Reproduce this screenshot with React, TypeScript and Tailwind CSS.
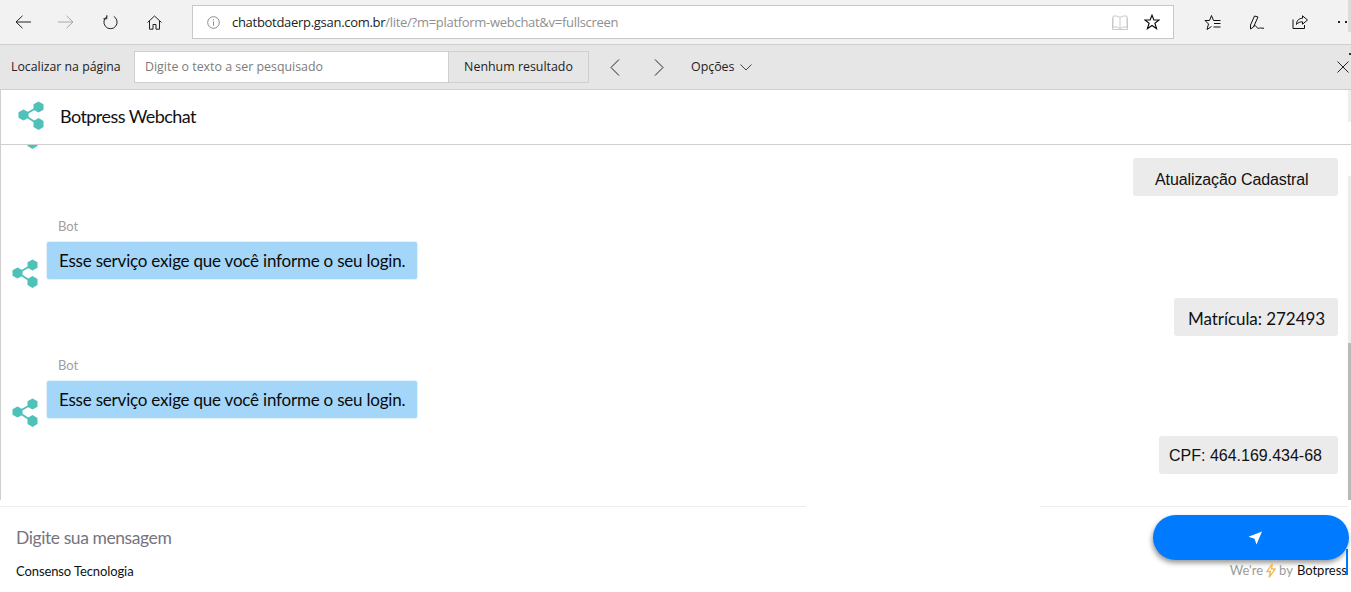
import React from "react";

const Logo = ({ className }: { className?: string }) => (
  <svg viewBox="0 0 26 29" className={className} fill="#4fc1b9">
    <path d="M6 14 20 6M6 14 20 23" stroke="#4fc1b9" strokeWidth="2" fill="none" />
    <polygon points="5.5,8.5 10.5,11.2 10.5,16.8 5.5,19.5 0.5,16.8 0.5,11.2" />
    <polygon points="20.5,0.5 25.5,3.2 25.5,8.8 20.5,11.5 15.5,8.8 15.5,3.2" />
    <polygon points="20.5,17 25.5,20 25.5,26 20.5,29 15.5,26 15.5,20" />
  </svg>
);

const Ic = ({ w = 16, h = 16, children, color = "#222", className = "" }: any) => (
  <svg width={w} height={h} viewBox={`0 0 ${w} ${h}`} fill="none" stroke={color} strokeWidth="1" className={className}>
    {children}
  </svg>
);

const BotMsg = ({ mt }: { mt: string }) => (
  <div className={`flex flex-col ${mt}`}>
    <div className="ml-[57px] text-[13px] leading-[16px] text-[#a0a0a0]">Bot</div>
    <div className="mt-[7px] flex items-start">
      <Logo className="ml-[11px] mt-[18px] h-[29px] w-[26px] shrink-0" />
      <div className="ml-[8px] flex h-[39px] w-[372px] items-center rounded-[3px] border border-[#e4f2fc] bg-[#a4d6f9] pl-[12px] pt-[1px] text-[17px] tracking-[-0.21px] text-[#0a0a0a]">
        Esse serviço exige que você informe o seu login.
      </div>
    </div>
  </div>
);

const UserMsg = ({ children, w, font, mt, pl }: any) => (
  <div className={`flex justify-end pr-[13px] ${mt}`}>
    <div className={`flex h-[38px] items-center rounded-[3px] bg-[#ebebeb] ${w} ${pl} ${font} text-[#111]`}>{children}</div>
  </div>
);

export default function App() {
  return (
    <div className="relative h-[592px] w-[1351px] overflow-hidden bg-white font-['Lato',sans-serif]">
      {/* browser toolbar */}
      <div className="flex h-[45px] items-center border-b border-[#cfcfcf] bg-[#f2f2f2]">
        <div className="ml-[15px] w-[16px]">
          <Ic h={14}><path d="M16 7H1M7.5.8 1 7l6.5 6.2" /></Ic>
        </div>
        <div className="ml-[27px] w-[16px]">
          <Ic h={14} color="#a8a8a8"><path d="M0 7h15M8.5.8 15 7l-6.5 6.2" /></Ic>
        </div>
        <div className="ml-[29px] w-[15px]">
          <Ic w={15} h={15}><path d="M4.2 1.4 a6.6 6.6 0 1 0 6.6 0M3.8 0.2v3.6H0.4" /></Ic>
        </div>
        <div className="ml-[29px] w-[15px]">
          <Ic w={15} h={15}><path d="M.5 7.5 7.5 1l7 6.5M2.5 6v8.2h3.5V9.5h3v4.7h3.5V6" /></Ic>
        </div>
        <div className="ml-[30px] flex h-[34px] w-[982px] items-center border border-[#c8c8c8] bg-white">
          <div className="ml-[14px]">
            <Ic w={13} h={13} color="#8a8a8a">
              <circle cx="6.5" cy="6.5" r="5.8" />
              <path d="M6.5 5.6v4M6.5 3.2v1.2" />
            </Ic>
          </div>
          <div className="ml-[12px] mt-[1px] whitespace-nowrap font-['Open_Sans',sans-serif] text-[13px] tracking-[-0.29px] text-[#222]">
            chatbotdaerp.gsan.com.br<span className="text-[#8f8f8f]">/lite/?m=platform-webchat&amp;v=fullscreen</span>
          </div>
          <div className="ml-auto">
            <Ic w={16} h={15} color="#c9c9c9">
              <path d="M8 2.5C6 1 3.5.8 1 1.2v11c2.5-.4 5-.2 7 1.3 2-1.5 4.5-1.7 7-1.3v-11C12.5.8 10 1 8 2.5ZM8 2.5v11M.5 3v11.5h15V3" />
            </Ic>
          </div>
          <div className="ml-[16px] mr-[13px]">
            <Ic w={16} h={16} color="#111">
              <path d="M8 1.2 9.9 6h5.2l-4.2 3.2 1.6 5.4L8 11.4l-4.5 3.2 1.6-5.4L.9 6h5.2Z" strokeWidth="1.2" />
            </Ic>
          </div>
        </div>
        <div className="ml-[30px]">
          <Ic w={17} h={16} color="#111">
            <path d="M9.500 6.500 7.500 1.500 5.500 6.500H1L4.500 10 3 15.500 7.500 12.500" />
            <path d="M9.500 6.500h7M10 9.500h6.500M9.500 13h7" />
          </Ic>
        </div>
        <div className="ml-[29px]">
          <Ic w={15} h={16} color="#111">
            <path d="M4.500 2 8 3 3.500 13 .5 15 .5 11ZM3.500 13C5.500 8.500 6.500 15 8.500 14.300c1.500-.5 2-.3 5.500 0" />
          </Ic>
        </div>
        <div className="ml-[27px]">
          <Ic w={16} h={15} color="#111">
            <path d="M1 4.500V13.500H12.500V10M15.500 5 10.500 .8V3.300C7 3.300 4.500 5.500 4.500 9.500 6 7.500 8 6.800 10.500 6.800V9.200Z" />
          </Ic>
        </div>
        <div className="ml-[30px] flex gap-[5px]">
          <span className="h-[2px] w-[2px] bg-[#222]" />
          <span className="h-[2px] w-[2px] bg-[#222]" />
        </div>
      </div>

      {/* find bar */}
      <div className="flex h-[45px] items-center border-b border-[#cfcfcf] bg-[#e6e6e6] font-['Open_Sans',sans-serif] text-[12.4px] text-[#222]">
        <div className="ml-[11px] w-[123px] whitespace-nowrap text-[12.3px]">Localizar na página</div>
        <div className="flex h-[32px] w-[315px] items-center border border-[#cfcfcf] bg-white pl-[10px] text-[#7c7c7c]">
          Digite o texto a ser pesquisado
        </div>
        <div className="flex h-[32px] w-[140px] items-center justify-center border-y border-r border-[#cfcfcf]">
          Nenhum resultado
        </div>
        <div className="ml-[21px]">
          <Ic w={10} h={17}><path d="M9 .5 1 8.500l8 8" /></Ic>
        </div>
        <div className="ml-[34px]">
          <Ic w={10} h={17}><path d="M1 .5l8 8-8 8" /></Ic>
        </div>
        <div className="ml-[27px]">Opções</div>
        <div className="ml-[6px]">
          <Ic w={12} h={7} color="#444"><path d="M.5.5 6 6l5.500-5.500" /></Ic>
        </div>
        <div className="ml-auto mr-[2px]">
          <Ic w={12} h={12}><path d="M.5.5l11 11M11.500.5l-11 11" /></Ic>
        </div>
      </div>

      {/* webchat header */}
      <div className="flex h-[55px] items-center border-b border-l border-b-[#cfcfcf] border-l-[#cfcfcf] bg-white">
        <Logo className="mb-[4px] ml-[17px] h-[29px] w-[26px]" />
        <div className="mb-[2px] ml-[16px] text-[18px] tracking-[-0.56px] text-[#111]">Botpress Webchat</div>
      </div>

      {/* messages */}
      <div className="h-[355px] overflow-hidden border-l border-[#cfcfcf] bg-white">
        <div className="h-[4px] overflow-hidden">
          <Logo className="-mt-[25px] ml-[11px] h-[29px] w-[26px]" />
        </div>
        <UserMsg w="w-[205px]" pl="pl-[22px] pt-[5px]" mt="mt-[9px]" font="font-['Liberation_Sans',sans-serif] text-[16px] tracking-[-0.1px]">
          Atualização Cadastral
        </UserMsg>
        <BotMsg mt="mt-[22px]" />
        <UserMsg w="w-[164px]" pl="pl-[14px] pt-[4px]" mt="mt-[10px]" font="text-[17px] tracking-[-0.06px]">
          Matrícula: 272493
        </UserMsg>
        <BotMsg mt="mt-[21px]" />
        <UserMsg w="w-[179px]" pl="pl-[10px] pt-[1px]" mt="mt-[9px]" font="font-['Liberation_Sans',sans-serif] text-[16px]">
          CPF: 464.169.434-68
        </UserMsg>
      </div>

      {/* composer */}
      <div className="mt-[6px] flex h-[1px]">
        <div className="w-[806px] bg-[#ececec]" />
        <div className="w-[234px]" />
        <div className="w-[308px] bg-[#ececec]" />
      </div>
      <div className="flex h-[85px] justify-between">
        <div className="pl-[16px]">
          <div className="mt-[20px] text-[17.5px] leading-[22px] tracking-[-0.42px] text-[#75757f]">Digite sua mensagem</div>
          <div className="mt-[13px] text-[13px] leading-[18px] tracking-[-0.1px] text-[#111]">Consenso Tecnologia</div>
        </div>
        <div className="flex w-[198px] flex-col items-end">
          <div className="mr-[2px] mt-[8px] flex h-[45px] w-[196px] items-center justify-center rounded-[24px] bg-[#007bff] shadow-[-1px_3px_5px_rgba(0,0,0,0.4)]">
            <svg width="14" height="14" viewBox="0 0 14 14" className="ml-[8px]">
              <path d="M14 0.500 8.500 13.500 6.500 7.800 0.500 5.800Z" fill="#fff" />
            </svg>
          </div>
          <div className="mr-[4px] mt-[1px] flex items-center whitespace-nowrap text-[13px] leading-[18px] text-[#9b9b9b]">
            We're
            <svg width="10" height="15" viewBox="0 0 10 15" className="mx-[3px]">
              <path d="M6.500 .5 1 8.500h3.500L3 14.500 9 6H5.500Z" fill="none" stroke="#f5b94a" strokeWidth="1.300" />
            </svg>
            by <span className="ml-[4px] text-[#111]">Botpress</span>
          </div>
        </div>
      </div>

      {/* window scrollbar fragments that lie over the page */}
      <div className="absolute right-0 top-0 h-[32px] w-[3px] bg-[#dcdcdc]" />
      <div className="absolute right-0 top-[53px] h-[2px] w-[2px] bg-[#333]" />
      <div className="absolute right-0 top-[90px] h-[32px] w-[3px] bg-[#eeeeee]" />
      <div className="absolute right-0 top-[176px] h-[167px] w-[3px] bg-[#ececec]" />
      <div className="absolute right-0 top-[343px] h-[157px] w-[3px] bg-[#b9b9b9]" />
      <div className="absolute left-[1346px] top-[549px] h-[26px] w-[2px] bg-[#007bff]" />
    </div>
  );
}
